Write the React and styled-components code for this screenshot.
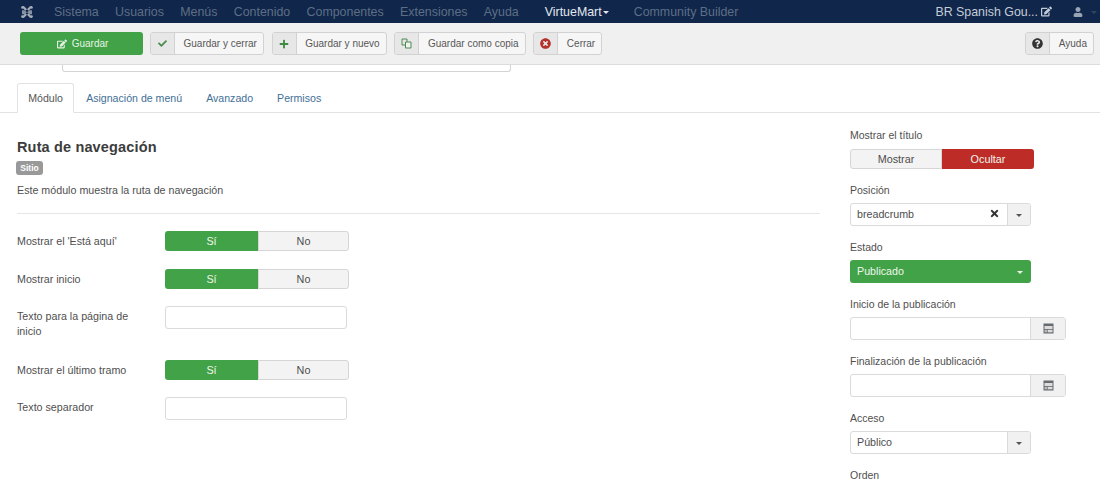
import React from "react";
import styled, { createGlobalStyle } from "styled-components";
import { FaEdit, FaCheck, FaPlus, FaTimesCircle, FaQuestionCircle, FaUser, FaTimes } from "react-icons/fa";

const Global = createGlobalStyle`
  html, body { margin: 0; padding: 0; background: #fff; overflow: hidden; }
  body { font-family: "Liberation Sans", Arial, sans-serif; font-size: 11px; color: #4f4f4f; }
  * { box-sizing: border-box; }
`;

const Page = styled.div`width: 1100px; height: 485px; overflow: hidden;`;
const Navbar = styled.div`
  height: 23px; background: #10264a; display: flex; align-items: center;
  padding: 0 3px 0 20px; font-size: 12.4px; color: #5f7186;
`;
const NavItem = styled.span`
  margin-right: ${p => p.$gap ?? 16.3}px; color: ${p => (p.$active ? "#e3e8ee" : "#5d6f86")};
  white-space: nowrap; display: inline-flex; align-items: center;
`;
const Caret = styled.i`
  display: inline-block; width: 0; height: 0; margin-left: ${p => p.$ml ?? 0}px; margin-top: 1px;
  border-left: 3.5px solid transparent; border-right: 3.5px solid transparent;
  border-top: 3.5px solid ${p => p.$color || "#e3e8ee"};
`;
const NavRight = styled.div`margin-left: auto; display: flex; align-items: center; color: #c3ccd8;`;
const NavLinkIcon = styled.span`display: inline-flex; margin: 0 21px 0 3px; color: #c3ccd8;`;
const NavUserIcon = styled.span`display: inline-flex; margin-right: 8px; color: #98a4b3;`;
const Toolbar = styled.div`
  height: 42px; background: #f0f0f0; border-bottom: 1px solid #dcdcdc;
  display: flex; align-items: center; padding: 0 6px 0 20px; gap: 7.8px;
`;
const PrimaryBtn = styled.div`
  width: 123px; height: 23px; margin-right: -0.8px; background: #41a247; border-radius: 3px; color: #e6f3e5; font-size: 10px;
  display: flex; align-items: center; justify-content: center; gap: 5px; padding-left: 2px;
`;
const ToolBtn = styled.div`
  height: 23px; display: flex; border: 1px solid #d2d2d2; border-radius: 3px; background: #f6f6f6;
  color: #565656; font-size: 10px; overflow: hidden;
`;
const BtnIcon = styled.span`
  width: 24px; background: #e7e7e7; border-right: 1px solid #d2d2d2;
  display: flex; align-items: center; justify-content: center; color: ${p => p.$color};
`;
const BtnText = styled.span`padding: 0 6px 0 8.5px; display: flex; align-items: center; white-space: nowrap;`;
const Spacer = styled.div`flex: 1;`;
const CutInput = styled.div`
  margin-left: 62px; width: 449px; height: 7px; border: 1px solid #d4d4d4; border-top: 0;
  border-radius: 0 0 3px 3px;
`;
const Tabs = styled.div`
  margin-top: 11px; height: 30px; border-bottom: 1px solid #e2e2e2; display: flex; padding-left: 17px;
  font-size: 10.6px;
`;
const Tab = styled.div`
  height: 30px; display: flex; align-items: center; padding: 0 12px; white-space: nowrap;
  color: ${p => (p.$active ? "#555" : "#3f6f97")};
  ${p => p.$active && "background:#fff;border:1px solid #e2e2e2;border-bottom-color:#fff;border-radius:3px 3px 0 0;padding:0 10.2px;"}
`;
const Body = styled.div`display: grid; grid-template-columns: 850px 250px;`;
const Left = styled.div`padding-left: 17px;`;
const Title = styled.h2`margin: 26px 0 0; font-size: 14.5px; line-height: 17px; font-weight: 700; color: #3c3c3c; letter-spacing: .15px;`;
const Badge = styled.div`
  margin: 5px 0 0 -1px; width: 27px; height: 14px; background: #999; border-radius: 3px; color: #fff;
  font-size: 8.5px; font-weight: 700; display: flex; align-items: center; justify-content: center;
`;
const Desc = styled.p`margin: 8px 0 0; font-size: 10.7px; line-height: 15px;`;
const Rule = styled.hr`margin: 15px 0 0; width: 803px; border: 0; border-top: 1px solid #e6e6e6;`;
const Form = styled.div`margin-top: 17px;`;
const Row = styled.div`display: flex; align-items: flex-start; margin-bottom: ${p => p.$mb}px;`;
const RowLabel = styled.div`width: 148px; padding: 3px 20px 0 0; font-size: 10.7px; line-height: 15px;`;
const Toggle = styled.div`display: flex; height: 20px; width: 184px; font-size: 10.8px;`;
const ToggleOption = styled.div`
  width: ${p => p.$w}px; display: flex; align-items: center; justify-content: center; padding-bottom: 1px;
  background: ${p => p.$bg || "#f3f3f3"}; color: ${p => (p.$bg ? "#edf6ec" : "#4d4d4d")};
  border: ${p => (p.$bg ? "0" : "1px solid #d5d5d5")};
  border-radius: ${p => (p.$first ? "3px 0 0 3px" : "0 3px 3px 0")};
`;
const TextInput = styled.div`
  width: 182px; height: 23px; border: 1px solid #dadada; border-radius: 3px; background: #fff;
`;
const Right = styled.div`padding-top: 15px;`;
const Field = styled.div`margin-bottom: 14px;`;
const FieldLabel = styled.div`
  font-size: 10.5px; line-height: 13px; padding-top: 1px; margin-bottom: ${p => p.$mb ?? 6}px; color: #4f4f4f;
`;
const Select = styled.div`
  width: 181px; height: 23px; display: flex; border-radius: 3px; font-size: 10.7px;
  background: ${p => p.$green ? "#41a247" : "#fff"}; color: ${p => p.$green ? "#eef7ed" : "#4d4d4d"};
  border: ${p => p.$green ? "0" : "1px solid #dadada"};
`;
const SelectValue = styled.div`
  flex: 1; padding: 0 7px 2px ${p => p.$green ? 7 : 6}px; display: flex; align-items: center; justify-content: space-between;
`;
const SelectArrow = styled.div`
  width: 23px; display: flex; align-items: center; justify-content: center;
  background: ${p => p.$green ? "transparent" : "#f1f1f1"};
  border-left: ${p => p.$green ? "0" : "1px solid #dadada"};
  border-radius: 0 3px 3px 0;
`;
const DateField = styled.div`width: 216px; height: 23px; display: flex; border: 1px solid #dadada; border-radius: 3px;`;
const DateText = styled.div`flex: 1;`;
const DateBtn = styled.div`
  width: 35px; background: #f1f1f1; border-left: 1px solid #dadada; display: flex; align-items: center; justify-content: center;
`;

const Joomla = () => (
  <svg width="14" height="14" viewBox="0 0 14 14" fill="#a4adb8">
    <path d="M1 3a2 2 0 0 1 3.6-1.2L7 4.2 5.4 5.8 3.2 3.6A2 2 0 0 1 1 3z" />
    <path d="M13 3a2 2 0 0 0-3.6-1.2L7 4.2l1.6 1.6 2.2-2.2A2 2 0 0 0 13 3z" />
    <path d="M1 11a2 2 0 0 0 3.6 1.2L7 9.8 5.4 8.2l-2.2 2.2A2 2 0 0 0 1 11z" />
    <path d="M13 11a2 2 0 0 1-3.6 1.2L7 9.8l1.6-1.6 2.2 2.2A2 2 0 0 1 13 11z" />
    <path d="M2 5.2h2.5l2.5 2-2.5 2H2z M12 5.2H9.5L7 7.2l2.5 2H12z" opacity=".8" />
  </svg>
);
const CopyIcon = () => (
  <svg width="11" height="11" viewBox="0 0 11 11" fill="none" stroke="#4f8a52" strokeWidth="1">
    <path d="M1 1h5v6H1z" /><path d="M4.5 4H10v6H4.5z" fill="#eef3ee" />
  </svg>
);
const Calendar = () => (
  <svg width="11" height="11" viewBox="0 0 11 11">
    <rect x="0.5" y="0.5" width="10" height="10" fill="#666b70" />
    <rect x="1.5" y="3" width="8" height="3" fill="#dcdcdc" />
    <rect x="1.5" y="6.8" width="3" height="2.5" fill="#b9b9b9" />
    <rect x="5" y="6.8" width="4.5" height="2.5" fill="#dcdcdc" />
  </svg>
);

const YesNo = () => (
  <Toggle>
    <ToggleOption $first $w={93} $bg="#41a247">Sí</ToggleOption>
    <ToggleOption $w={91}>No</ToggleOption>
  </Toggle>
);

export default function App() {
  return (
    <Page>
      <Global />
      <Navbar>
        <NavItem $gap={20}><Joomla /></NavItem>
        <NavItem>Sistema</NavItem>
        <NavItem>Usuarios</NavItem>
        <NavItem>Menús</NavItem>
        <NavItem>Contenido</NavItem>
        <NavItem>Componentes</NavItem>
        <NavItem>Extensiones</NavItem>
        <NavItem $gap={26}>Ayuda</NavItem>
        <NavItem $active $gap={25}>VirtueMart<Caret $ml={1} /></NavItem>
        <NavItem>Community Builder</NavItem>
        <NavRight>
          <span>BR Spanish Gou...</span>
          <NavLinkIcon><FaEdit size={11} /></NavLinkIcon>
          <NavUserIcon><FaUser size={10} /></NavUserIcon>
          <Caret $color="#33455f" />
        </NavRight>
      </Navbar>
      <Toolbar>
        <PrimaryBtn><FaEdit size={10} />Guardar</PrimaryBtn>
        <ToolBtn><BtnIcon $color="#4a8d4e"><FaCheck size={9} /></BtnIcon><BtnText>Guardar y cerrar</BtnText></ToolBtn>
        <ToolBtn><BtnIcon $color="#3f8b44"><FaPlus size={10} /></BtnIcon><BtnText>Guardar y nuevo</BtnText></ToolBtn>
        <ToolBtn><BtnIcon><CopyIcon /></BtnIcon><BtnText>Guardar como copia</BtnText></ToolBtn>
        <ToolBtn><BtnIcon $color="#b5312c"><FaTimesCircle size={11} /></BtnIcon><BtnText>Cerrar</BtnText></ToolBtn>
        <Spacer />
        <ToolBtn><BtnIcon $color="#333"><FaQuestionCircle size={11} /></BtnIcon><BtnText>Ayuda</BtnText></ToolBtn>
      </Toolbar>
      <CutInput />
      <Tabs>
        <Tab $active>Módulo</Tab>
        <Tab>Asignación de menú</Tab>
        <Tab>Avanzado</Tab>
        <Tab>Permisos</Tab>
      </Tabs>
      <Body>
        <Left>
          <Title>Ruta de navegación</Title>
          <Badge>Sitio</Badge>
          <Desc>Este módulo muestra la ruta de navegación</Desc>
          <Rule />
          <Form>
            <Row $mb={18}><RowLabel>Mostrar el 'Está aquí'</RowLabel><YesNo /></Row>
            <Row $mb={17}><RowLabel>Mostrar inicio</RowLabel><YesNo /></Row>
            <Row $mb={21}><RowLabel>Texto para la página de inicio</RowLabel><TextInput /></Row>
            <Row $mb={17}><RowLabel>Mostrar el último tramo</RowLabel><YesNo /></Row>
            <Row $mb={0}><RowLabel>Texto separador</RowLabel><TextInput /></Row>
          </Form>
        </Left>
        <Right>
          <Field>
            <FieldLabel $mb={7}>Mostrar el título</FieldLabel>
            <Toggle>
              <ToggleOption $first $w={92}>Mostrar</ToggleOption>
              <ToggleOption $w={92} $bg="#bd2c27">Ocultar</ToggleOption>
            </Toggle>
          </Field>
          <Field>
            <FieldLabel>Posición</FieldLabel>
            <Select>
              <SelectValue>breadcrumb<FaTimes size={11} color="#333" /></SelectValue>
              <SelectArrow><Caret $color="#555" /></SelectArrow>
            </Select>
          </Field>
          <Field>
            <FieldLabel>Estado</FieldLabel>
            <Select $green>
              <SelectValue $green>Publicado</SelectValue>
              <SelectArrow $green><Caret $color="#eef7ed" /></SelectArrow>
            </Select>
          </Field>
          <Field>
            <FieldLabel>Inicio de la publicación</FieldLabel>
            <DateField><DateText /><DateBtn><Calendar /></DateBtn></DateField>
          </Field>
          <Field>
            <FieldLabel>Finalización de la publicación</FieldLabel>
            <DateField><DateText /><DateBtn><Calendar /></DateBtn></DateField>
          </Field>
          <Field>
            <FieldLabel>Acceso</FieldLabel>
            <Select>
              <SelectValue>Público</SelectValue>
              <SelectArrow><Caret $color="#555" /></SelectArrow>
            </Select>
          </Field>
          <Field>
            <FieldLabel>Orden</FieldLabel>
          </Field>
        </Right>
      </Body>
    </Page>
  );
}
